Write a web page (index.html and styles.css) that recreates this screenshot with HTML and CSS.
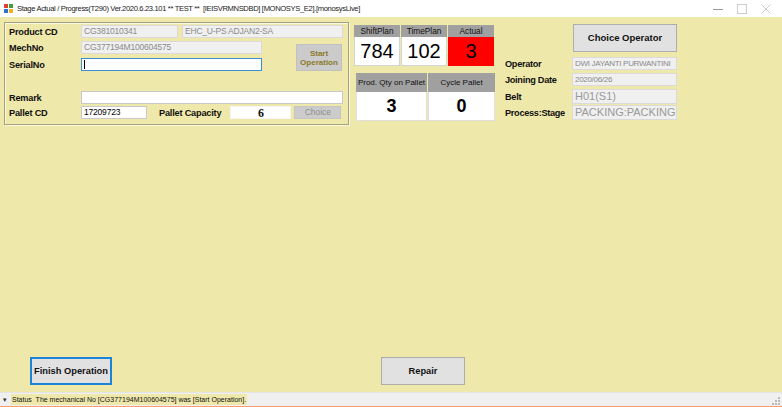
FILE: index.html
```html
<!DOCTYPE html>
<html>
<head>
<meta charset="utf-8">
<link rel="stylesheet" href="styles.css">
</head>
<body>
<div class="window">
  <div class="titlebar">
    <svg class="app-icon" width="9" height="9" viewBox="0 0 9 9">
      <rect x="0" y="0" width="4" height="4" fill="#e04030"/>
      <rect x="5" y="0" width="4" height="4" fill="#40a040"/>
      <rect x="0" y="5" width="4" height="4" fill="#3070d0"/>
      <rect x="5" y="5" width="4" height="4" fill="#f0b020"/>
    </svg>
    <span class="title-text">Stage Actual / Progress(T290) Ver.2020.6.23.101 ** TEST **&nbsp; [IEISVRMNSDBD] [MONOSYS_E2].[monosysLive]</span>
    <div class="win-controls">
      <svg width="10" height="10" viewBox="0 0 10 10"><line x1="0" y1="5.5" x2="10" y2="5.5" stroke="#999" stroke-width="1"/></svg>
      <svg width="10" height="10" viewBox="0 0 10 10"><rect x="0.5" y="0.5" width="9" height="9" fill="none" stroke="#ccc" stroke-width="1"/></svg>
      <svg width="10" height="10" viewBox="0 0 10 10"><path d="M0.5 0.5 L9.5 9.5 M9.5 0.5 L0.5 9.5" stroke="#ccc" stroke-width="1"/></svg>
    </div>
  </div>

  <div class="client">
    <div class="top">
      <div class="groupbox">
        <div class="row r1">
          <span class="lbl">Product CD</span>
          <div class="tb disabled w97">CG381010341</div>
          <div class="tb disabled w161 ml4">EHC_U-PS ADJAN2-SA</div>
        </div>
        <div class="mid">
          <div class="midcol">
            <div class="row">
              <span class="lbl">MechNo</span>
              <div class="tb disabled w181">CG377194M100604575</div>
            </div>
            <div class="row r3">
              <span class="lbl">SerialNo</span>
              <div class="tb focus w181"><span class="caret"></span></div>
            </div>
          </div>
          <div class="btn-start">Start<br>Operation</div>
        </div>
        <div class="row r4">
          <span class="lbl">Remark</span>
          <div class="tb w262"></div>
        </div>
        <div class="row r5">
          <span class="lbl">Pallet CD</span>
          <div class="tb w66">17209723</div>
          <span class="lbl lbl-cap">Pallet Capacity</span>
          <div class="tb cap">6</div>
          <div class="btn-choice">Choice</div>
        </div>
      </div>

      <div class="metrics">
        <div class="mrow">
          <div class="mcell">
            <div class="mhead">ShiftPlan</div>
            <div class="mval">784</div>
          </div>
          <div class="mcell">
            <div class="mhead">TimePlan</div>
            <div class="mval">102</div>
          </div>
          <div class="mcell">
            <div class="mhead">Actual</div>
            <div class="mval red">3</div>
          </div>
        </div>
        <div class="mrow2">
          <div class="mcell2 w71">
            <div class="mhead2">Prod. Qty on Pallet</div>
            <div class="mval2">3</div>
          </div>
          <div class="mcell2 w67">
            <div class="mhead2">Cycle Pallet</div>
            <div class="mval2">0</div>
          </div>
        </div>
      </div>

      <div class="operator">
        <div class="btn-op">Choice Operator</div>
        <div class="orow o1">
          <span class="olbl">Operator</span>
          <div class="tb disabled ow small">DWI JAYANTI PURWANTINI</div>
        </div>
        <div class="orow o2">
          <span class="olbl">Joining Date</span>
          <div class="tb disabled ow small">2020/06/26</div>
        </div>
        <div class="orow o3">
          <span class="olbl">Belt</span>
          <div class="tb disabled ow big">H01(S1)</div>
        </div>
        <div class="orow o4">
          <span class="olbl">Process:Stage</span>
          <div class="tb disabled ow big">PACKING:PACKING</div>
        </div>
      </div>
    </div>

    <div class="spacer"></div>

    <div class="bottom">
      <div class="btn-finish">Finish Operation</div>
      <div class="btn-repair">Repair</div>
    </div>
  </div>

  <div class="statusbar">
    <span class="drop">&#9662;</span>
    <span class="status-text">Status&nbsp; The mechanical No [CG377194M100604575] was [Start Operation].</span>
    <svg class="grip" width="8" height="8" viewBox="0 0 8 8">
      <rect x="6" y="0" width="2" height="2" fill="#bbb"/>
      <rect x="3" y="3" width="2" height="2" fill="#bbb"/>
      <rect x="6" y="3" width="2" height="2" fill="#bbb"/>
      <rect x="0" y="6" width="2" height="2" fill="#bbb"/>
      <rect x="3" y="6" width="2" height="2" fill="#bbb"/>
      <rect x="6" y="6" width="2" height="2" fill="#bbb"/>
    </svg>
  </div>
</div>
</body>
</html>
```

FILE: styles.css
```css
* { box-sizing: border-box; }
html, body { margin: 0; padding: 0; }
body {
  width: 782px;
  height: 407px;
  overflow: hidden;
  font-family: "Liberation Sans", Arial, sans-serif;
  background: #fff;
}
.window {
  width: 782px;
  height: 407px;
  display: flex;
  flex-direction: column;
}
.titlebar {
  height: 17px;
  flex: none;
  background: #fff;
  display: flex;
  align-items: center;
  padding-left: 4px;
}
.app-icon { flex: none; }
.title-text {
  margin-left: 4px;
  font-family: "Liberation Sans", Arial, sans-serif;
  font-size: 7.6px;
  letter-spacing: -0.35px;
  color: #222;
  white-space: nowrap;
}
.win-controls {
  margin-left: auto;
  display: flex;
  gap: 14px;
  padding-right: 11px;
  align-items: center;
}

.client {
  flex: 1;
  background: #eee8aa;
  display: flex;
  flex-direction: column;
}
.top {
  display: flex;
  align-items: flex-start;
  padding-top: 5px;
  padding-left: 4px;
}
.groupbox {
  width: 345px;
  height: 103px;
  border: 1px solid #a6a07c;
  box-shadow: inset 1px 1px 0 #fbf8e0, 1px 1px 0 #fbf8e0;
  padding: 2px 4px 0 4px;
  display: flex;
  flex-direction: column;
}
.row {
  display: flex;
  align-items: center;
  height: 13px;
}
.lbl {
  width: 72px;
  flex: none;
  font-size: 9.2px;
  font-weight: bold;
  color: #111;
  white-space: nowrap;
  letter-spacing: -0.2px;
}
.tb {
  height: 13px;
  background: #fff;
  border: 1px solid #c8c8c8;
  font-size: 8.5px;
  line-height: 11px;
  padding-left: 2px;
  color: #111;
  white-space: nowrap;
  overflow: hidden;
  letter-spacing: -0.2px;
}
.tb.disabled {
  background: #f0f0f0;
  border-color: #dadada;
  color: #8a8a8a;
}
.tb.focus {
  border-color: #3b8dd6;
  display: flex;
  align-items: center;
}
.caret {
  width: 1px;
  height: 9px;
  background: #000;
}
.w97 { width: 97px; }
.w161 { width: 161px; }
.ml4 { margin-left: 4px; }
.w181 { width: 181px; }
.w262 { width: 262px; }
.w66 { width: 66px; color: #000; }
.mid {
  display: flex;
  margin-top: 3px;
}
.midcol {
  display: flex;
  flex-direction: column;
}
.r3 { margin-top: 4px; }
.btn-start {
  margin-left: 34px;
  margin-top: 3px;
  width: 46px;
  height: 27px;
  background: #cbcbcb;
  border: 1px solid #c0c0c0;
  color: #8a7a2a;
  font-size: 8px;
  font-weight: bold;
  text-align: center;
  line-height: 9px;
  padding-top: 4px;
}
.r4 { margin-top: 20px; }
.r5 { margin-top: 2px; }
.lbl-cap {
  width: auto;
  margin-left: 12px;
}
.cap {
  margin-left: 9px;
  width: 61px;
  border-color: #f5f5f5;
  text-align: center;
  font-family: "Liberation Serif", serif;
  font-weight: bold;
  font-size: 12px;
  line-height: 12px;
  padding-left: 0;
}
.btn-choice {
  margin-left: 3px;
  width: 47px;
  height: 13px;
  background: #cccccc;
  border: 1px solid #c4c4c4;
  color: #8d8d8d;
  font-size: 8.5px;
  text-align: center;
  line-height: 11px;
}

.metrics {
  margin-left: 5px;
  margin-top: 3px;
  width: 141px;
  flex: none;
}
.mrow {
  display: flex;
  gap: 1px;
}
.mcell {
  width: 46px;
  display: flex;
  flex-direction: column;
}
.mhead {
  height: 12px;
  background: #a0a0a0;
  font-size: 8.3px;
  line-height: 12px;
  text-align: center;
  color: #111;
}
.mval {
  height: 29px;
  background: #fff;
  border: 1px solid #d4d4d4;
  border-top: none;
  font-size: 20px;
  line-height: 29px;
  text-align: center;
  color: #000;
}
.mval.red { background: #ff0000; border-color: #ff0000; }
.mrow2 {
  display: flex;
  gap: 1px;
  margin-top: 7px;
  margin-left: 2px;
}
.mcell2 {
  display: flex;
  flex-direction: column;
}
.w71 { width: 71px; }
.w67 { width: 67px; }
.mhead2 {
  height: 19px;
  background: #a0a0a0;
  font-size: 8px;
  line-height: 19px;
  text-align: center;
  color: #111;
}
.mval2 {
  height: 29px;
  background: #fff;
  border: 1px solid #e0e0e0;
  border-top: none;
  font-size: 18px;
  font-weight: bold;
  line-height: 29px;
  text-align: center;
  color: #000;
}

.operator {
  margin-left: 10px;
  margin-top: 2px;
  display: flex;
  flex-direction: column;
}
.btn-op {
  margin-left: 68px;
  width: 104px;
  height: 28px;
  background: #e1e1e1;
  border: 1px solid #adadad;
  font-size: 9.5px;
  font-weight: bold;
  text-align: center;
  line-height: 26px;
  color: #111;
}
.orow {
  display: flex;
  align-items: center;
}
.olbl {
  width: 67px;
  flex: none;
  font-size: 9.2px;
  font-weight: bold;
  color: #111;
  white-space: nowrap;
  letter-spacing: -0.3px;
}
.ow { width: 105px; }
.tb.small {
  font-size: 8px;
  letter-spacing: -0.3px;
}
.o1 { margin-top: 5px; }
.o2 { margin-top: 3px; }
.o3 { margin-top: 3px; }
.o4 { margin-top: 1px; }
.tb.big {
  height: 15px;
  font-size: 11px;
  line-height: 13px;
  letter-spacing: 0;
  color: #999;
}

.spacer { flex: 1; }
.bottom {
  display: flex;
  align-items: center;
  padding-left: 30px;
  padding-bottom: 7px;
}
.btn-finish {
  width: 82px;
  height: 28px;
  background: #e1e1e1;
  border: 2px solid #1c84d6;
  font-size: 9.3px;
  font-weight: bold;
  text-align: center;
  line-height: 24px;
  color: #111;
}
.btn-repair {
  margin-left: 269px;
  width: 84px;
  height: 28px;
  background: #e1e1e1;
  border: 1px solid #adadad;
  font-size: 9.3px;
  font-weight: bold;
  text-align: center;
  line-height: 26px;
  color: #111;
}

.statusbar {
  height: 15px;
  flex: none;
  background: #f0f0f0;
  border-top: 1px solid #e4e4e4;
  border-bottom: 1px solid #f0a070;
  display: flex;
  align-items: center;
  padding-left: 3px;
}
.drop {
  font-size: 7px;
  color: #333;
  width: 7px;
}
.status-text {
  margin-left: 1px;
  background: #eee8aa;
  font-size: 7px;
  color: #111;
  padding: 0 1px;
  line-height: 11px;
  white-space: nowrap;
}
.grip {
  margin-left: auto;
  margin-right: 2px;
  align-self: flex-end;
  margin-bottom: 1px;
}
```
